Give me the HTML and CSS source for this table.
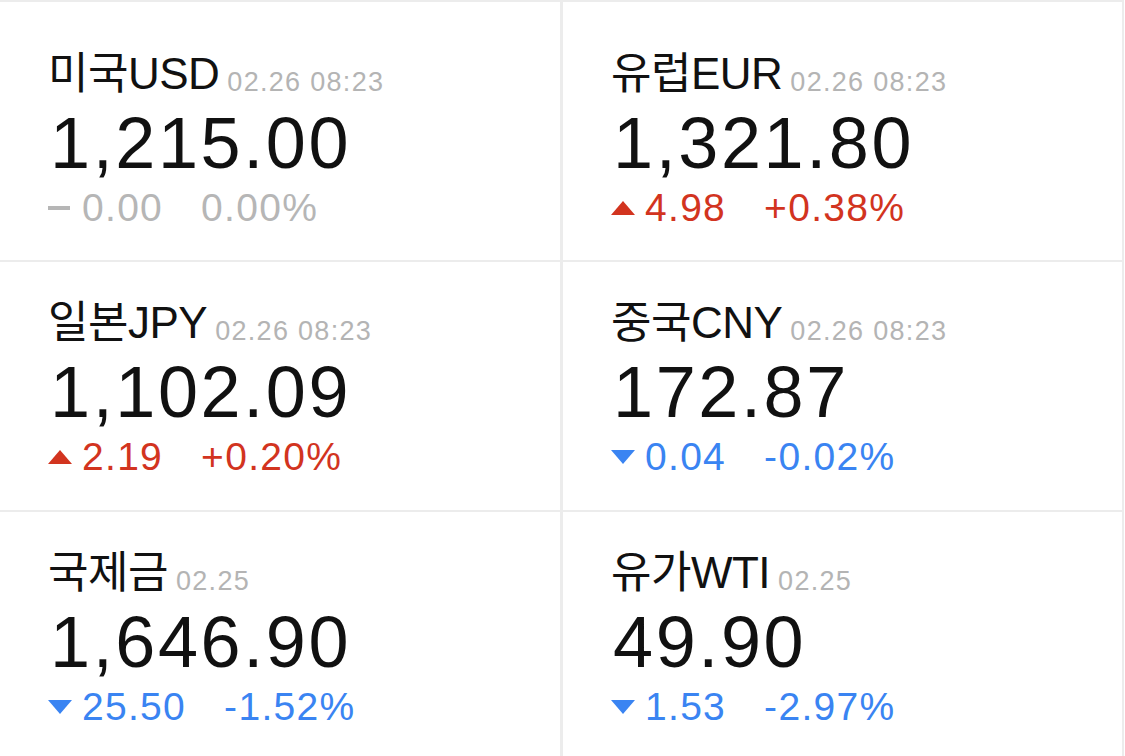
FILE: index.html
```html
<!DOCTYPE html>
<html lang="ko">
<head>
<meta charset="utf-8">
<link rel="stylesheet" href="styles.css">
</head>
<body>
<div class="board">
  <div class="cell first">
    <div class="head"><span class="name">미국USD</span><span class="time">02.26 08:23</span></div>
    <div class="price">1,215.00</div>
    <div class="change flat"><span class="mark dash"></span><span class="amt">0.00</span><span class="pct">0.00%</span></div>
  </div>
  <div class="cell first">
    <div class="head"><span class="name">유럽EUR</span><span class="time">02.26 08:23</span></div>
    <div class="price">1,321.80</div>
    <div class="change up"><span class="mark tri-up"></span><span class="amt">4.98</span><span class="pct">+0.38%</span></div>
  </div>
  <div class="cell">
    <div class="head"><span class="name">일본JPY</span><span class="time">02.26 08:23</span></div>
    <div class="price">1,102.09</div>
    <div class="change up"><span class="mark tri-up"></span><span class="amt">2.19</span><span class="pct">+0.20%</span></div>
  </div>
  <div class="cell">
    <div class="head"><span class="name">중국CNY</span><span class="time">02.26 08:23</span></div>
    <div class="price">172.87</div>
    <div class="change down"><span class="mark tri-down"></span><span class="amt">0.04</span><span class="pct">-0.02%</span></div>
  </div>
  <div class="cell">
    <div class="head"><span class="name">국제금</span><span class="time">02.25</span></div>
    <div class="price">1,646.90</div>
    <div class="change down"><span class="mark tri-down"></span><span class="amt">25.50</span><span class="pct">-1.52%</span></div>
  </div>
  <div class="cell">
    <div class="head"><span class="name">유가WTI</span><span class="time">02.25</span></div>
    <div class="price">49.90</div>
    <div class="change down"><span class="mark tri-down"></span><span class="amt">1.53</span><span class="pct">-2.97%</span></div>
  </div>
</div>
</body>
</html>
```
FILE: styles.css
```css
html, body {
  margin: 0;
  padding: 0;
  background: #ffffff;
}
body {
  font-family: "Liberation Sans", "Noto Sans CJK KR", sans-serif;
  color: #111111;
  overflow: hidden;
}
.board {
  display: grid;
  grid-template-columns: 560px 559px;
  grid-template-rows: 258px 248px 248px;
  gap: 2px 3px;
  padding: 2px 2px 0 0;
  background: #ececec;
  width: 1122px;
}
.cell {
  background: #ffffff;
  padding: 35px 0 0 48px;
  display: flex;
  flex-direction: column;
}
.cell.first {
  padding-top: 46px;
}
.head {
  display: flex;
  align-items: baseline;
  gap: 8px;
  height: 52px;
}
.name {
  font-size: 44px;
  line-height: 52px;
  letter-spacing: -0.5px;
  color: #111111;
}
.time {
  font-size: 27px;
  letter-spacing: 1.3px;
  color: #b4b4b4;
  position: relative;
  top: 2px;
}
.price {
  font-size: 72px;
  line-height: 80px;
  letter-spacing: 2.6px;
  color: #111111;
  margin: 3px 0 0 2px;
}
.change {
  display: flex;
  align-items: center;
  font-size: 39px;
  line-height: 40px;
  letter-spacing: 1.3px;
  margin-top: 5px;
}
.change .amt {
  margin-right: 38px;
}
.flat { color: #b6b6b6; }
.up { color: #d2341f; }
.down { color: #3a84f2; }
.mark {
  display: inline-block;
  margin-right: 10px;
}
.dash {
  width: 22px;
  height: 4px;
  background: #b6b6b6;
  margin-right: 12px;
}
.tri-up {
  width: 0;
  height: 0;
  border-left: 12px solid transparent;
  border-right: 12px solid transparent;
  border-bottom: 14px solid #d2341f;
}
.tri-down {
  width: 0;
  height: 0;
  border-left: 12px solid transparent;
  border-right: 12px solid transparent;
  border-top: 14px solid #3a84f2;
}
```
